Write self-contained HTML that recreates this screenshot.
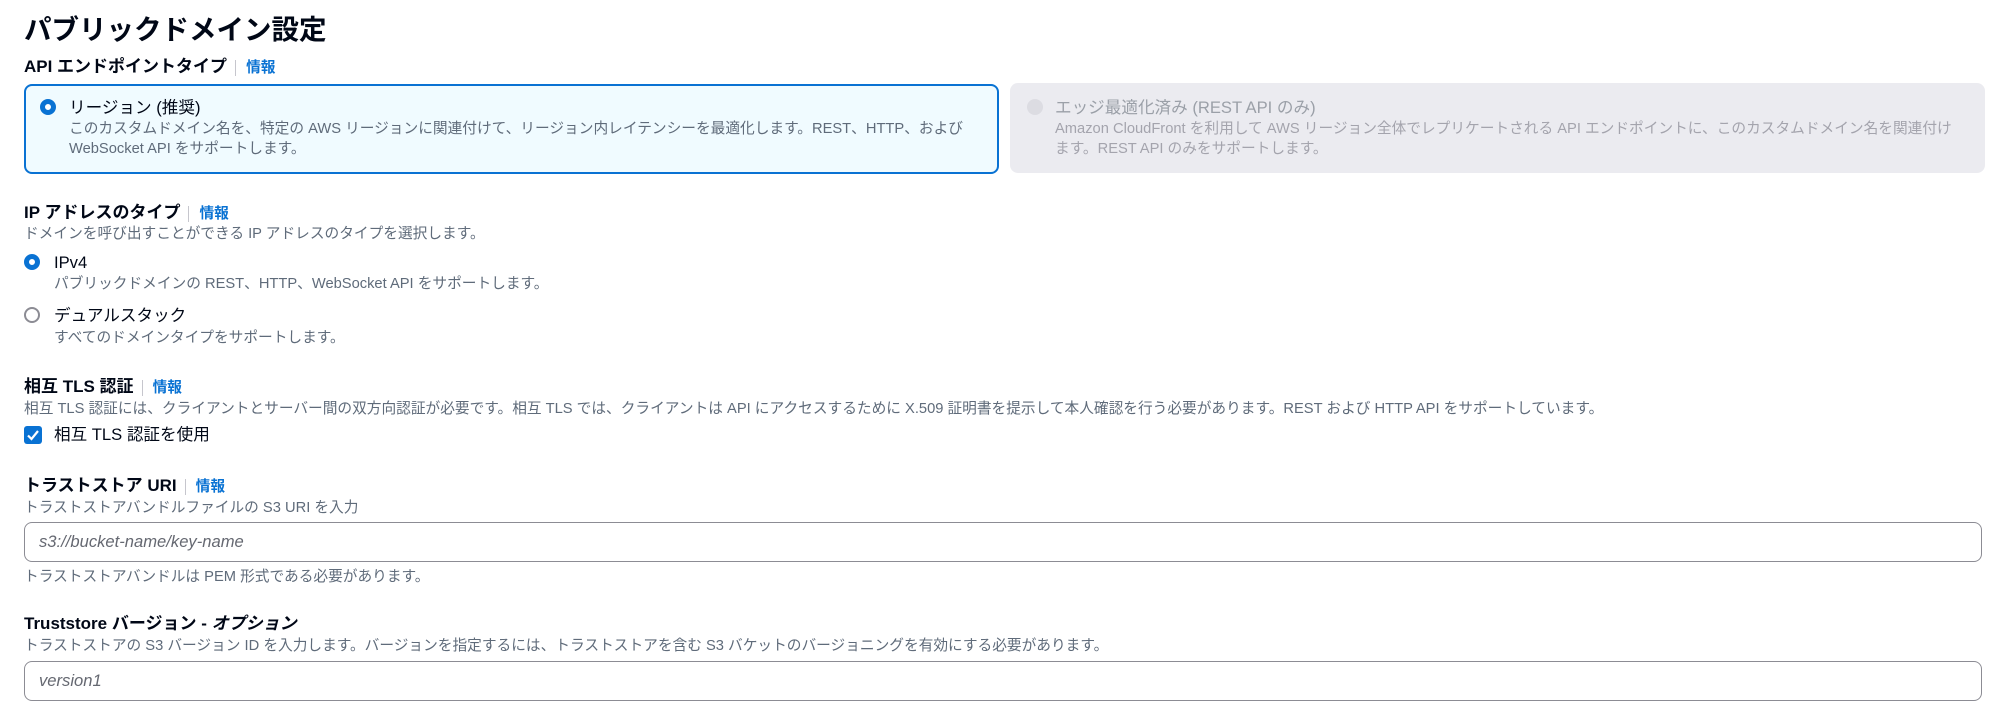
<!DOCTYPE html>
<html><head><meta charset="utf-8"><style>
body{margin:0;width:2000px;height:714px;background:#fff;font-family:"Liberation Sans","Noto Sans CJK JP",sans-serif;color:#000716;position:relative;overflow:hidden}
.a{position:absolute;white-space:nowrap}
.t{font-size:27.5px;font-weight:bold}
.l{font-size:17px;font-weight:bold;line-height:20px}
.l .i{color:#0972d3;font-size:14.7px;border-left:1px solid #c6c6cd;padding-left:10px;margin-left:8px}
.d{font-size:14.7px;color:#5f6b7a;line-height:20px}
.v{font-size:16.6px;line-height:20px}
.card{position:absolute;border-radius:8px;box-sizing:border-box}
.r{position:absolute;width:16px;height:16px;border-radius:50%;box-sizing:border-box}
.inp{position:absolute;left:24px;width:1958px;border:1px solid #8c8c94;border-radius:8px;box-sizing:border-box;font-size:16.6px;font-style:italic;color:#656871;padding-left:14px}
</style></head><body>
<div class="a t" style="left:24px;top:7px">パブリックドメイン設定</div>
<div class="a l" style="left:24px;top:57px">API エンドポイントタイプ<span class="i">情報</span></div>

<div class="card" style="left:24px;top:84px;width:975px;height:90px;border:2px solid #0972d3;background:#f0fbff"></div>
<div class="r" style="left:40px;top:99px;border:5px solid #0972d3;background:#fff"></div>
<div class="a v" style="left:69px;top:98px">リージョン (推奨)</div>
<div class="a d" style="left:69px;top:119px;white-space:normal;width:915px">このカスタムドメイン名を、特定の AWS リージョンに関連付けて、リージョン内レイテンシーを最適化します。REST、HTTP、および WebSocket API をサポートします。</div>

<div class="card" style="left:1010px;top:83px;width:975px;height:90px;background:#ebebf0"></div>
<div class="r" style="left:1027px;top:99px;background:#dcdce2"></div>
<div class="a v" style="left:1055px;top:98px;color:#9ba0a8">エッジ最適化済み (REST API のみ)</div>
<div class="a d" style="left:1055px;top:119px;white-space:normal;width:905px;color:#a4a4ad">Amazon CloudFront を利用して AWS リージョン全体でレプリケートされる API エンドポイントに、このカスタムドメイン名を関連付けます。REST API のみをサポートします。</div>

<div class="a l" style="left:24px;top:203px">IP アドレスのタイプ<span class="i">情報</span></div>
<div class="a d" style="left:24px;top:224px">ドメインを呼び出すことができる IP アドレスのタイプを選択します。</div>
<div class="r" style="left:24px;top:254px;border:5px solid #0972d3;background:#fff"></div>
<div class="a v" style="left:54px;top:253px">IPv4</div>
<div class="a d" style="left:54px;top:274px">パブリックドメインの REST、HTTP、WebSocket API をサポートします。</div>
<div class="r" style="left:24px;top:307px;border:2px solid #8c8c94;background:#fff"></div>
<div class="a v" style="left:54px;top:306px">デュアルスタック</div>
<div class="a d" style="left:54px;top:328px">すべてのドメインタイプをサポートします。</div>

<div class="a l" style="left:24px;top:377px">相互 TLS 認証<span class="i">情報</span></div>
<div class="a d" style="left:24px;top:399px">相互 TLS 認証には、クライアントとサーバー間の双方向認証が必要です。相互 TLS では、クライアントは API にアクセスするために X.509 証明書を提示して本人確認を行う必要があります。REST および HTTP API をサポートしています。</div>
<div class="a" style="left:24px;top:426px;width:18px;height:18px;background:#0972d3;border-radius:3px"><svg width="18" height="18"><path d="M4 9.5l3.5 3.5 6.5-8" stroke="#fff" stroke-width="2.2" fill="none"/></svg></div>
<div class="a v" style="left:54px;top:425px">相互 TLS 認証を使用</div>

<div class="a l" style="left:24px;top:476px">トラストストア URI<span class="i">情報</span></div>
<div class="a d" style="left:24px;top:498px">トラストストアバンドルファイルの S3 URI を入力</div>
<div class="inp" style="top:522px;height:40px;line-height:38px">s3://bucket-name/key-name</div>
<div class="a d" style="left:24px;top:567px">トラストストアバンドルは PEM 形式である必要があります。</div>

<div class="a l" style="left:24px;top:614px">Truststore バージョン - <i>オプション</i></div>
<div class="a d" style="left:24px;top:636px">トラストストアの S3 バージョン ID を入力します。バージョンを指定するには、トラストストアを含む S3 バケットのバージョニングを有効にする必要があります。</div>
<div class="inp" style="top:661px;height:40px;line-height:38px">version1</div>
</body></html>
